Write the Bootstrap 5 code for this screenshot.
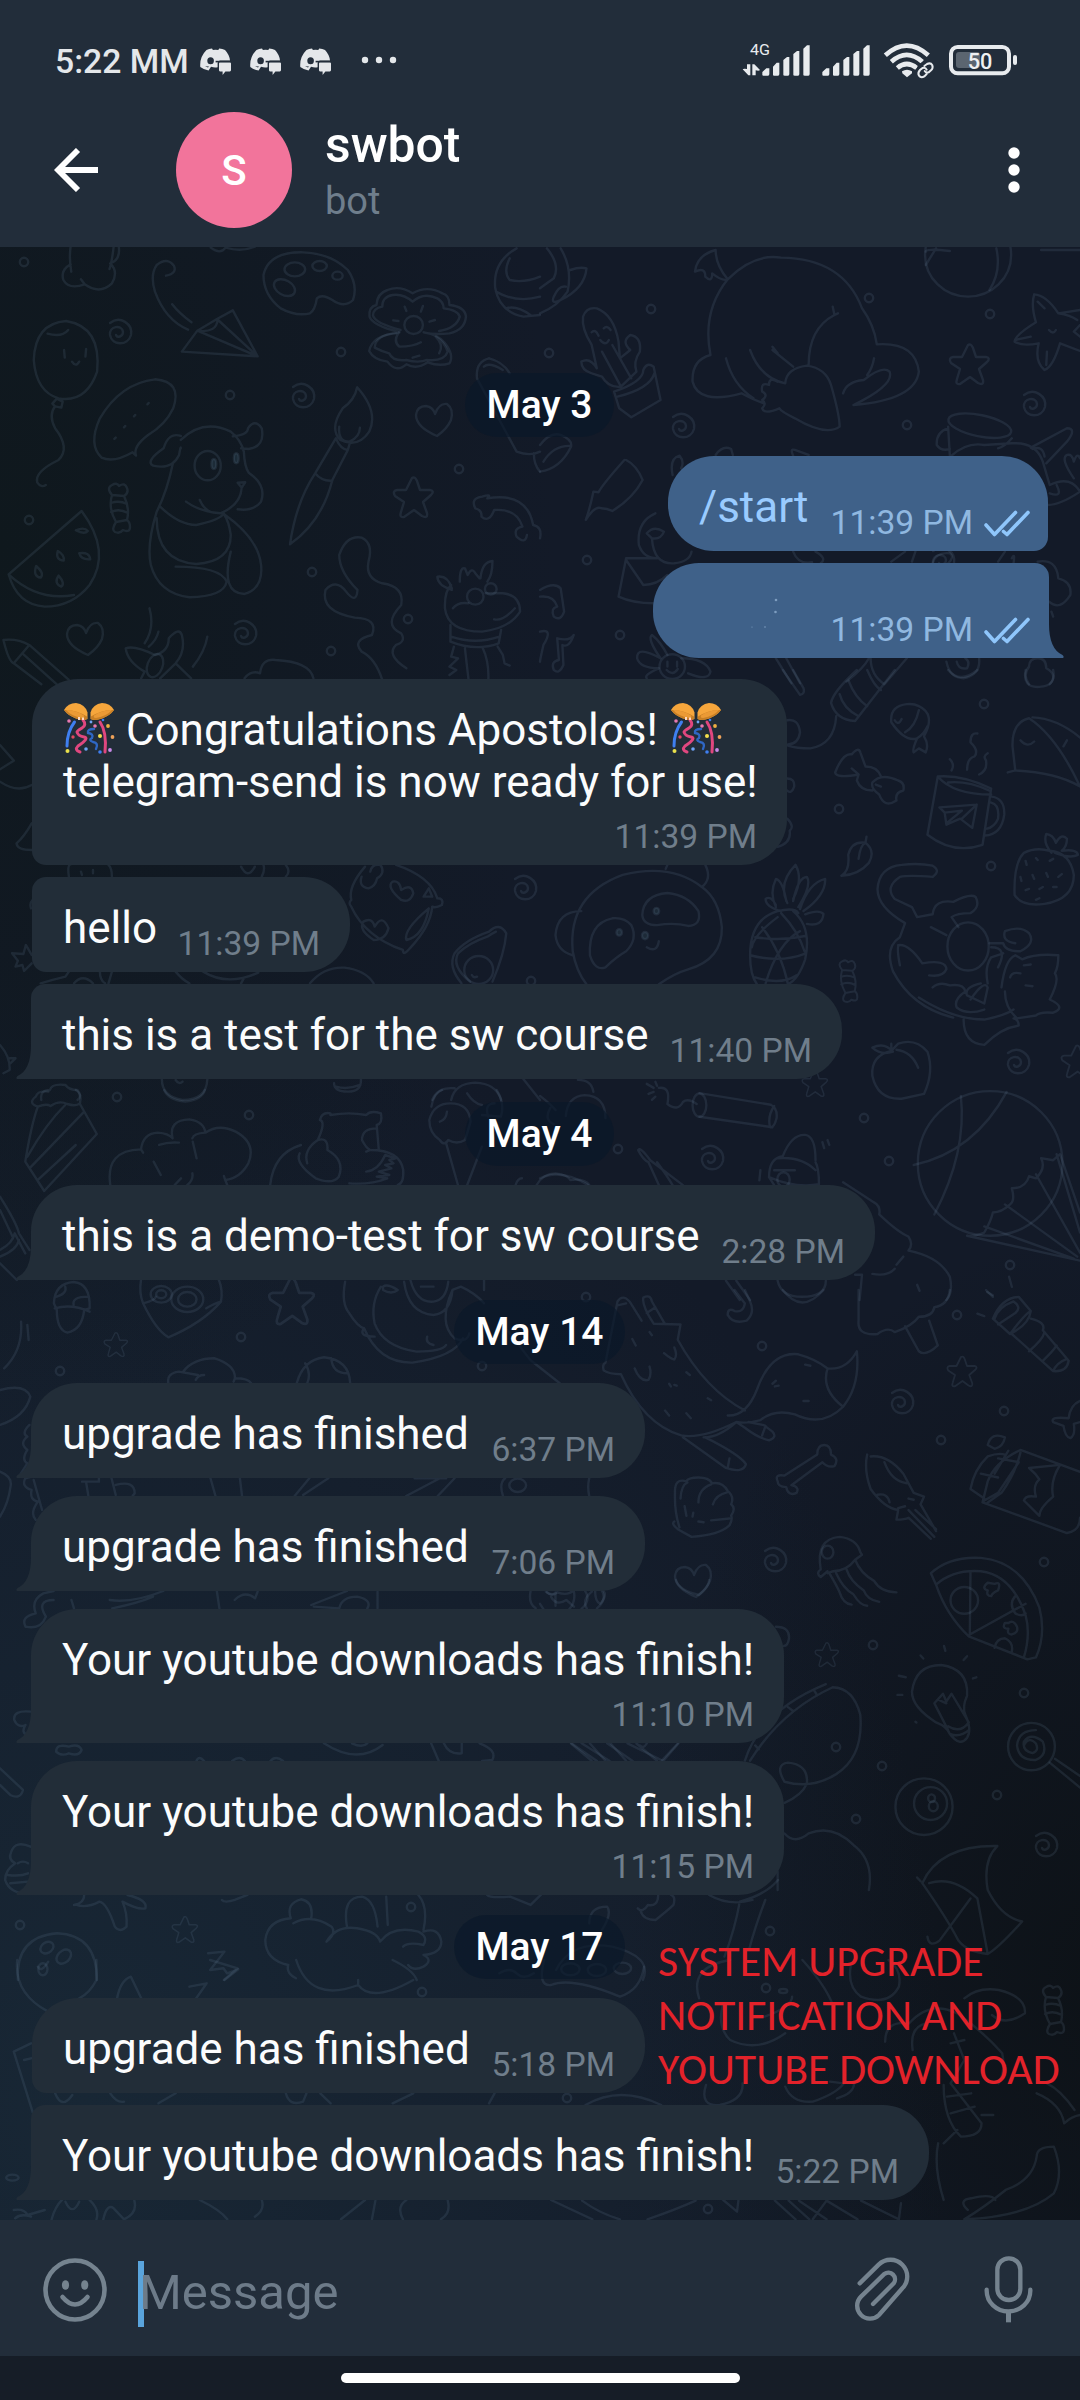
<!DOCTYPE html>
<html lang="en">
<head>
<meta charset="utf-8">
<meta name="viewport" content="width=device-width, initial-scale=1">
<title>swbot</title>
<link href="https://cdn.jsdelivr.net/npm/bootstrap@5.3.0/dist/css/bootstrap.min.css" rel="stylesheet">
<style>
body{margin:0;background:#131a28;font-family:Roboto,"Liberation Sans",sans-serif;color:#fff}
.phone{width:1080px;height:2400px;overflow:hidden}
.topbar{height:247px;background:#222d3a;z-index:3}
.statusline{height:112px;padding:12px 52px 0 55px;color:#e8ebee}
.clock{font-size:33.7px;font-weight:500;line-height:40px;color:#e4e7ea}
.appline{height:116px;padding:0 60px 0 54px}
.avatar-s{width:116px;height:116px;margin-left:78px;background:#f2749b;font-size:42px;font-weight:500}
.titles{margin-left:33px;height:116px;padding-top:4px}
.peer{font-size:49.8px;font-weight:500;line-height:58px}
.peer-kind{font-size:38px;line-height:44px;margin-top:5px;color:#6f7e8c}
.chat{height:1973px;z-index:1;
 background:
 radial-gradient(ellipse 560px 900px at 0 15%,#0f181d 0,rgba(15,24,29,0) 100%),
 radial-gradient(ellipse 860px 1150px at 8% 94%,#182735 0,rgba(24,39,53,0) 100%),
 radial-gradient(ellipse 480px 760px at 102% 88%,#0d1217 0,rgba(13,18,23,0) 100%),
 #131a28}
.doodles{left:0;top:-247px;z-index:0;fill:none;stroke:#7597ae;stroke-opacity:.14;stroke-width:2.4;stroke-linecap:round;stroke-linejoin:round}
.doodles *{vector-effect:non-scaling-stroke}
.thread{z-index:1;padding:126px 32px 0 31px}
.day{height:64px;line-height:64px;border-radius:32px;padding:0 22px;background:rgba(9,24,41,.64);font-size:39px;font-weight:500;align-self:center}
.bub{background:#222d38;height:95px;border-radius:46px;padding:25px 30px 8px 31px;color:#fbfcfd}
.bub-text{font-size:43.98px;line-height:52px;white-space:nowrap}
.bub-time{font-size:33.6px;line-height:40px;color:#707e8b;white-space:nowrap}
.two{height:134px}.three{height:186px}
.out{background:#3f6189;color:#99cbff}
.out .bub-time{color:#90b8e0}
.tail-l{left:-15px;bottom:0}
.tail-r{right:-15px;bottom:0}
.jl{border-top-left-radius:14px}.kl{border-bottom-left-radius:14px;margin-left:1px}
.t0l{border-bottom-left-radius:0}.t0r{border-bottom-right-radius:0}
.jr{border-top-right-radius:14px}.kr{border-bottom-right-radius:14px}
.g12{margin-top:12px}.g18{margin-top:18px}.g19{margin-top:19px}.g20{margin-top:20px}.g21{margin-top:21px}.g23{margin-top:23px}
.ticks{margin:0 -10px 5px 11px}
.out{padding-right:28px}
.party{vertical-align:-9px}
.annot{left:658px;top:1687px;font-family:Carlito,Lato,sans-serif;font-size:43.7px;line-height:54px;color:#e3222a;z-index:2;white-space:nowrap}
.composer{height:136px;background:#222d3a;padding:0 20px 0 41px;color:#6d7b89}
.caret-bar{width:6px;height:66px;background:#5aa4dc;margin-left:29px;margin-top:12px}
.hint{font-size:49px;line-height:58px;margin-left:-5px;margin-top:9px;color:#6d7b89}
.tools{margin-top:12px}
.navarea{height:44px;background:#161d27;padding-top:17px}
.pillbar{width:399px;height:10px;border-radius:5px;background:#fff}
</style>
<script src="https://cdn.jsdelivr.net/npm/bootstrap@5.3.0/dist/js/bootstrap.bundle.min.js"></script>
</head>
<body>
<svg width="0" height="0" class="position-absolute">
<defs>
<symbol id="chatpad" viewBox="0 0 31 28"><path fill="#e4e7ea" fill-rule="evenodd" d="M6.5 2Q9 .7 12 .4L12.9 1.9Q15.5 1.5 18.3 1.9L19.2.4Q22.5.8 25 2Q29.3 6.5 30 12.4H20Q17.8 12.6 17.6 15V19.2Q14.5 19.8 11 18.8L8.6 22.6Q3.5 21.5.3 19Q-.6 9 6.5 2ZM10.6 9.2A3.3 3.5 0 1 0 10.6 16.2A3.3 3.5 0 1 0 10.6 9.2ZM5 18.2L8 19.6 9 18.4Z"/><path fill="#e4e7ea" d="M20 14.2H29.8Q31 14.2 31 15.4V22Q31 23.4 29.8 23.4H25.4L22.6 27V23.4H20Q19 23.4 19 22V15.4Q19 14.2 20 14.2Z"/><path stroke="#222d3a" stroke-width="1.6" d="M15.6 13.6H31"/></symbol>
<symbol id="dtick" viewBox="0 0 46 28"><path fill="none" stroke="#8fc6fb" stroke-width="3.6" stroke-linecap="round" stroke-linejoin="round" d="M2 15L10.5 24.5 31.5 2.5M19.5 21.5L23 24.5 44 2.5"/></symbol>
<symbol id="tailL" viewBox="0 0 20 34"><path d="M20 0V34H1Q-.5 33 1.5 31Q15 25 15 0Z" fill="#222d38"/></symbol>
<symbol id="tailR" viewBox="0 0 20 34"><path d="M0 0V34H19Q20.5 33 18.5 31Q5 25 5 0Z" fill="#3f6189"/></symbol>
<symbol id="kusudama" viewBox="0 0 52 52">
<path fill="#f6a63c" d="M1 8Q5 1 13 1Q22 2 24.5 10.5V17Q20 19 13 16.5Q5 13.500 1 8Z"/><path fill="#c87f25" d="M1 8Q12 7 24 14.500V17Q20 19 13 16.500Q5 13.500 1 8Z"/><path fill="#eb9a35" d="M3 8Q13 8 21 13.500 22 16 19 16 8 14 3 8Z"/>
<path fill="#f6a63c" d="M51 8Q47 1 39 1Q30 2 27.500 10.500V17Q32 19 39 16.500Q47 13.500 51 8Z"/><path fill="#c87f25" d="M51 8Q40 7 28 14.500V17Q32 19 39 16.500Q47 13.500 51 8Z"/><path fill="#eb9a35" d="M49 8Q39 8 31 13.500 30 16 33 16 44 14 49 8Z"/>
<g fill="none" stroke-width="3" stroke-linecap="round"><path stroke="#3f7ff0" d="M11.500 20Q4 30 4 44"/><path stroke="#e0477f" d="M20 18Q24 23 19 26T14 30Q15 34 21 35T15 44Q11 48 17 50"/><path stroke="#2f67c4" stroke-width="2.400" d="M31 27Q24 27 25 31 31 32 29 36 25 38 30 40 36 41 33 47"/><path stroke="#e0477f" d="M37 20Q44 30 42 50"/></g>
<path stroke="#ffd9c0" stroke-width="2" d="M16 15V18M20 15.500V18"/>
<g><circle cx="6" cy="19" r="1.800" fill="#e879b0"/><circle cx="32" cy="24" r="1.800" fill="#e879b0"/><circle cx="45" cy="24" r="1.900" fill="#efb041"/><circle cx="49.500" cy="35" r="1.900" fill="#efa25a"/><circle cx="10" cy="35" r="1.700" fill="#e04a62"/><circle cx="37" cy="34" r="2" fill="#f5e04c"/><circle cx="4.500" cy="49" r="2" fill="#e9e04c"/><circle cx="23" cy="47" r="1.800" fill="#6fa4f5"/><circle cx="37" cy="50" r="1.800" fill="#3f7ff0"/><circle cx="47" cy="48" r="1.900" fill="#c98ae8"/><circle cx="28" cy="20" r="1.400" fill="#6fa4f5"/><circle cx="40" cy="18" r="1.300" fill="#3f7ff0"/></g></symbol>
<g id="sw"><path d="M-10 -9C0 -17 13 -8 11 3 8 14-8 14-10 3-11-6 2-8 3 0 3 5-3 6-4 3"/></g>
<g id="sr"><circle r="4.200"/></g>
<g id="st"><path d="M0-20Q3-22 5-17L8-8 18-8Q23-7 19-3L11 4 15 15Q16 21 10 18L2 12-8 19Q-13 20-11 14L-8 4-17-2Q-20-7-15-8L-6-8Z"/></g>
<g id="ht"><path d="M3 17Q-18 8-18-4 -17-13-8-13 -1-12 1-5 5-16 13-15 20-10 17 1 13 10 3 17Z"/></g>
<g id="cd"><path d="M-7-13Q-13-20-7-23 -2-26 0-22 6-26 8-20 10-15 5-12M-7-13L5-12Q11 0 8 12L-3 14Q-11 0-7-13M-3 14Q-8 22-4 24 1 26 4 22 11 25 11 19 11 14 8 12M-8-5Q0-8 8-4M-8 4Q0 0 9 5"/></g>
</defs>
</svg>
<div class="phone d-flex flex-column position-relative">
 <header class="topbar position-relative">
  <div class="statusline d-flex align-items-center">
   <span class="clock">5:22 MM</span>
   <svg class="ms-3" style="margin-left:11px!important" width="31" height="28"><use href="#chatpad"/></svg>
   <svg width="31" height="28" style="margin-left:19px"><use href="#chatpad"/></svg>
   <svg width="31" height="28" style="margin-left:19px"><use href="#chatpad"/></svg>
   <svg class="ms-4" width="46" height="20" fill="#e4e7ea"><circle cx="10" cy="8" r="3.200"/><circle cx="24" cy="8" r="3.200"/><circle cx="38" cy="8" r="3.200"/></svg>
   <svg class="ms-auto flex-shrink-0" style="margin-right:-2px" width="290" height="56" viewBox="0 0 870 168" fill="#e8ebee">
    <text x="30" y="63" font-size="45" fill="#e8ebee" textLength="60" lengthAdjust="spacingAndGlyphs">4G</text>
    <path d="M21 91H31V124H25L8 106Q10 103 21 105ZM37 124V91H43L60 108Q57 112 47 109V124Z"/>
    <path d="M67 124V114L79 103H88V120Q88 125 84 125H70ZM99 124V98L110 86H118V120Q118 125 114 125H102ZM130 124V78L141 69H148V120Q148 125 144 125H134ZM160 124V60L171 51H178V120Q178 125 174 125H164ZM190 124V44L201 34H209V120Q209 125 205 125H194Z"/>
    <path transform="translate(180)" d="M67 124V114L79 103H88V120Q88 125 84 125H70ZM99 124V98L110 86H118V120Q118 125 114 125H102ZM130 124V78L141 69H148V120Q148 125 144 125H134ZM160 124V60L171 51H178V120Q178 125 174 125H164ZM190 124V44L201 34H209V120Q209 125 205 125H194Z"/>
    <g fill="none" stroke="#e8ebee" stroke-width="14"><path d="M436 64Q500 6 565 64"/><path d="M454 83Q500 42 547 83"/><path d="M472 102Q500 78 530 102"/></g>
    <path d="M486 112Q501 102 516 112V118L501 130 487 118Z"/>
    <circle cx="557" cy="109" r="27" fill="#222d3a"/>
    <g fill="none" stroke="#e8ebee" stroke-width="6" stroke-linecap="round"><path d="M553 96L561 90Q572 85 577 94 580 102 573 109L566 115Q558 118 554 111"/><path d="M560 120L553 127Q543 133 537 125 532 117 540 108L548 102Q556 99 560 107"/></g>
    <rect x="633" y="39" width="174" height="79" rx="20" fill="none" stroke="#e8ebee" stroke-width="12"/>
    <rect x="648" y="54" width="72" height="48" rx="9" fill="#5b6570"/>
    <text x="683" y="104" font-size="68" font-weight="500" fill="#eef0f2" textLength="74" lengthAdjust="spacingAndGlyphs">50</text>
    <rect x="819" y="63" width="12" height="30" rx="6"/>
   </svg>
  </div>
  <div class="appline d-flex align-items-center">
   <svg width="44" height="44" viewBox="0 0 44 44" fill="none" stroke="#fff" stroke-width="5.800"><path d="M24 2L4 22 24 42M4 22H44"/></svg>
   <div class="avatar-s rounded-circle d-flex align-items-center justify-content-center">S</div>
   <div class="titles"><div class="peer">swbot</div><div class="peer-kind">bot</div></div>
   <svg class="ms-auto" width="12" height="46" fill="#fff"><circle cx="6" cy="6" r="5.700"/><circle cx="6" cy="23" r="5.700"/><circle cx="6" cy="40" r="5.700"/></svg>
  </div>
 </header>
 <main class="chat position-relative overflow-hidden">
  <svg class="doodles position-absolute" width="1080" height="2400" viewBox="0 0 1080 2400">
   <g transform="translate(0 245) scale(.3444 .3333)">
    <path d="M205 5Q200 40 207 80M330 5Q325 50 318 72M205 58Q175 75 184 105 200 135 246 118 290 150 325 115 345 80 320 55Q350 45 345 5M246 118L235 103M612 8Q640 30 655 8 700 22 740 5"/>
    <path d="M482 92Q515 85 505 62 485 35 455 60 435 90 450 140 480 225 546 254M500 178Q520 205 556 232M573 257L630 222 676 196 748 334 528 320 573 257ZM573 257L748 334M630 222L748 334M573 257Q630 265 632 222"/>
    <path d="M880 22Q780 20 765 90 765 150 815 190 860 215 900 205 915 195 920 160 935 145 965 165 1000 190 1025 165 1040 120 1010 75 960 25 880 22Z"/><ellipse cx="856" cy="73" rx="30" ry="21"/><ellipse cx="928" cy="63" rx="21" ry="15"/><ellipse cx="980" cy="92" rx="15" ry="12"/><ellipse cx="826" cy="128" rx="33" ry="22" transform="rotate(30 826 128)"/>
    <path d="M1160 262Q1080 240 1073 215 1070 185 1093 180 1095 145 1125 135 1160 120 1198 145 1240 120 1285 145 1305 150 1305 180 1350 185 1353 215 1350 255 1305 265 1260 270 1230 262 1275 270 1290 292 1320 330 1305 355 1275 365 1242 352 1210 375 1180 358 1150 385 1125 350 1085 345 1072 318 1080 270 1160 262"/><path d="M1163 255Q1090 235 1083 212 1083 190 1110 185 1110 155 1140 150 1170 145 1198 170 1230 140 1270 160 1288 170 1288 190 1330 195 1335 215 1325 250 1275 258M1150 265Q1090 270 1088 308 1110 320 1130 325 1140 350 1180 345 1215 355 1240 345 1290 350 1300 320 1290 290 1265 275 1290 300 1275 325"/><circle cx="1201" cy="240" r="27"/><path d="M1175 185L1180 198M1228 183L1222 200M1142 226L1157 228M1247 230L1263 225M1158 262Q1140 290 1160 305 1200 305 1222 292M1198 338L1218 332"/>
    <path d="M192 228Q102 235 98 345 105 440 170 460 250 475 282 380 295 245 192 228ZM138 266Q180 278 198 255M186 315L188 338M250 312L248 335M209 350Q220 368 230 350M165 461L152 476 160 484 178 488 182 470 165 461M160 484Q140 510 160 550 205 610 170 645 100 680 108 712 120 730 133 720"/>
    <path d="M385 622Q330 655 295 638 255 600 290 520 350 415 450 403 530 410 503 490 480 540 430 570 385 605 395 632ZM432 474L428 478M393 510L389 514M364 543L360 547M336 578L332 582"/>
    <path d="M525 585Q590 520 670 560 700 585 708 620 710 665 722 683 775 720 758 770 735 800 690 793M525 573Q490 560 475 610 420 650 445 662 500 675 520 630 525 600 525 610M676 574Q720 570 720 550 740 520 760 550 770 605 722 612L700 610M502 655Q485 740 455 800 425 900 438 960 460 1045 550 1057 650 1055 658 1010 640 965 510 965M465 785Q520 840 570 840 640 825 650 805M540 770Q580 800 640 805 700 780 702 725M580 765Q590 790 610 800M455 820Q455 950 570 957 670 950 670 870 665 830 650 807 750 880 758 960 765 1030 710 1047 640 1045 670 920M690 713L712 712 702 728Z"/><ellipse cx="603" cy="662" rx="38" ry="44"/><ellipse cx="621" cy="657" rx="7" ry="15" fill="#1d2c38"/><ellipse cx="686" cy="640" rx="7" ry="15" fill="#1d2c38"/>
    <path d="M237 798L25 988Q50 1080 130 1085 210 1085 260 1020 325 920 237 798ZM25 988Q110 1070 215 1050M220 856Q245 870 255 858 245 845 220 856ZM230 925Q235 945 262 943 260 920 230 925ZM168 918Q160 945 185 947 188 930 168 918ZM105 963Q95 995 118 998 130 985 105 963ZM170 992Q155 1015 178 1025 190 1015 170 992Z"/>
    <path d="M1037 427Q1030 465 995 490 955 550 988 585 1040 610 1072 560 1100 500 1037 427ZM985 545Q980 590 1015 590 1045 575 1045 548M975 580Q990 615 1010 615L965 705Q935 830 842 898 860 770 915 685ZM1015 597L1010 615M915 685Q935 710 965 707"/>
    <path d="M1380 790Q1365 760 1400 755 1430 745 1415 760 1530 740 1548 840 1575 845 1568 880M1380 790Q1400 795 1398 815 1420 835 1435 795 1500 790 1517 845 1490 850 1500 875 1525 900 1530 870"/>
    <path d="M1110 1305Q1090 1240 1050 1220 1020 1185 1080 1170 1100 1120 1030 1118 930 1100 945 1035 975 1000 1005 1040 1035 1080 1038 1035 985 980 985 930 1005 870 1050 878 1085 895 1070 950 1060 1000 1110 1015 1175 1025 1165 1080 1110 1140 1165 1165 1180 1190 1150 1200 1120 1230 1180 1270 1190 1305"/>
    <path d="M1310 1020Q1290 1040 1292 1090 1300 1160 1400 1160 1480 1150 1510 1100 1510 1050 1460 1045H1410M1312 1035Q1270 1020 1270 995 1300 990 1312 1030M1335 1010Q1335 965 1350 970L1358 990Q1370 965 1380 985L1392 1000M1395 1000Q1400 950 1430 948 1430 990 1415 1010M1435 1123Q1460 1130 1495 1090M1315 1090Q1330 1070 1360 1075M1308 1140L1308 1190Q1380 1220 1448 1195L1455 1155M1310 1175Q1380 1200 1450 1175M1318 1205L1310 1235 1330 1240 1305 1265 1325 1275 1305 1290M1350 1210L1360 1300M1402 1210Q1420 1250 1418 1305M1445 1205L1460 1230 1465 1255 1480 1262"/><circle cx="1380" cy="1055" r="24"/><circle cx="1425" cy="1032" r="17"/>
    <path d="M10 1185Q25 1250 40 1255L85 1200Q50 1180 10 1185ZM40 1255L120 1318M85 1200L200 1305M65 1225L165 1318M434 1090Q450 1150 420 1195M460 1160Q455 1185 432 1205M602 1175Q595 1220 560 1265M410 1300L420 1280Q370 1250 365 1210 390 1200 450 1230 490 1220 490 1180 520 1145 528 1170 540 1220 510 1255L465 1300M510 1255L555 1300M710 1300Q730 1275 755 1285 760 1240 800 1245 900 1250 910 1300"/><ellipse cx="450" cy="1262" rx="22" ry="36" transform="rotate(20 450 1262)"/>
    <path d="M1420 340Q1380 350 1385 400L1500 620Q1540 635 1568 620M1420 340Q1460 350 1480 385M1405 365Q1420 350 1460 375M1550 625Q1550 660 1568 680M1500 10Q1430 50 1438 130 1450 200 1520 215L1568 210M1480 40Q1460 80 1480 105 1520 115 1568 95M1440 140Q1500 175 1568 155M1470 190Q1500 180 1540 210"/>
   </g>
   <g transform="translate(540 245) scale(.3444 .3333)">
    <path d="M60 10Q95 70 80 140 50 185 0 205M20 10Q60 60 40 100L0 130M88 75Q115 65 135 70 130 130 60 165 30 180 40 155 55 120 75 125"/>
    <path d="M125 215Q135 185 165 190 215 210 228 290L232 340 262 315Q235 290 262 270 295 275 290 320 270 350 280 380L235 425Q200 430 180 395L150 385Q120 375 120 350 145 335 165 370L150 300Q120 250 125 215ZM180 320L235 425M210 300L265 400M215 440L230 490 265 517 350 465 330 365Q310 350 300 375 300 410 215 440ZM225 455Q320 430 332 385M150 262Q160 250 170 272M185 250Q195 240 205 255M175 285Q190 305 200 285"/>
    <path d="M510 15Q455 30 450 80 480 65 480 95 500 115 500 85 530 110 545 103 510 60 510 15M545 103Q620 25 700 38 880 40 935 190 970 240 978 298 1090 290 1100 380 1090 465 910 480 1030 420 1015 380 995 360 940 405 890 410 880 445M545 103Q470 200 495 330 440 345 443 410 460 480 585 445 620 465 650 475M540 340Q560 420 620 460M610 315Q640 400 712 415M675 315L735 365M675 305L690 325M780 360Q780 250 855 210L850 185M855 210L865 205M970 340Q965 370 950 390M712 415Q715 370 775 362 830 370 845 420 870 510 870 545 830 575 740 520 700 500 695 490 650 510 645 490 660 475 645 465 665 450 645 440 640 410 665 420 665 395 690 410 710 425M845 400Q870 390 865 420 885 430 875 440 885 470 860 480M757 435Q765 495 778 435M815 440Q825 490 835 440M725 495Q740 520 760 515M540 365Q520 370 525 390 535 410 552 400M640 350Q665 350 662 375M715 15Q735 20 730 50 750 10 785 20L780 40M860 10Q920 30 958 52M915 55L958 75"/>
    <circle cx="1243" cy="30" r="125"/><path d="M1120 20Q1120 10 1190 18M1325 10Q1340 80 1305 135M1150 10L1120 60M1455 15L1568 15"/>
    <path d="M1435 148Q1425 180 1440 232 1380 270 1378 290 1400 305 1448 295 1435 350 1465 375 1490 365 1510 295L1568 318M1435 148Q1470 150 1505 205L1568 195M1505 205Q1540 210 1560 225M1568 240L1550 260 1568 275M1445 170L1465 190M1380 285L1425 275M1470 360L1472 320M1478 255Q1490 270 1498 255"/>
    <ellipse cx="1277" cy="542" rx="93" ry="32" transform="rotate(12 1277 542)"/><path d="M1185 545L1190 632M1370 580Q1350 605 1330 610M1185 550Q1150 560 1152 600 1165 620 1190 612M1195 632Q1240 590 1290 600L1370 595Q1440 590 1460 650L1480 720Q1540 690 1568 740M1425 608L1530 550Q1560 550 1530 590L1470 655M1430 612Q1460 600 1465 635M1500 720Q1520 760 1480 745M1550 700Q1510 640 1530 630 1545 625 1550 650 1560 620 1568 640M1475 780Q1510 780 1568 740"/>
    <path d="M245 645Q180 720 170 742L155 740Q145 790 133 825 160 780 178 790 195 790 210 798 270 760 298 705 280 660 250 645M0 600Q30 560 60 570 95 585 90 605 60 670 0 680M10 650Q40 600 90 603M385 690Q375 640 405 632 420 650 410 670M510 630Q530 600 555 612L560 630M735 632Q725 610 740 615L780 630M335 805Q280 830 287 900 300 940 340 940M310 865Q330 840 360 860 350 885 325 880ZM325 880Q330 960 390 955 435 950 440 920M250 940L228 1055Q270 1075 330 1075M250 945L300 1020Q340 1020 370 990M250 940L340 940M735 920Q750 960 790 952M800 920Q835 940 815 955M1140 955Q1150 920 1190 925 1205 935 1185 955M1020 950L1060 920M1090 920L1080 950M1330 950L1350 920M1370 940Q1380 920 1375 955M1445 950Q1500 940 1505 1000 1545 1010 1540 1050 1510 1100 1478 1070M1485 1100L1490 1115"/>
    <path d="M0 1035Q40 1010 60 1030L70 1100Q60 1130 40 1115 30 1090 50 1085 40 1050 0 1055M0 1160Q40 1150 10 1200 0 1245 0 1250M50 1180Q85 1190 98 1170 85 1210 65 1200L68 1260Q55 1290 40 1275 30 1250 55 1245ZM350 1240Q310 1180 325 1170 350 1190 370 1230M350 1240Q280 1200 282 1240 290 1270 345 1270 300 1290 310 1300M410 1240Q480 1240 495 1280 490 1310 430 1285"/><circle cx="384" cy="1265" r="37"/><path d="M370 1250V1265M398 1250V1265M368 1275Q385 1295 400 1272M685 1240L730 1315M715 1240L755 1315M890 1310Q940 1270 955 1240M960 1240Q960 1290 1000 1318M1065 1240L1000 1318M1180 1250Q1190 1300 1230 1300 1280 1290 1275 1240M1210 1250Q1215 1275 1240 1270 1250 1250 1235 1240M1445 1240Q1420 1240 1420 1265 1400 1290 1420 1318M1445 1240Q1470 1240 1470 1270 1505 1290 1480 1318"/>
   </g>
   <g transform="translate(540 670) scale(.3444 .4018)">
    <path d="M705 0L755 62Q770 60 765 45L735 0M845 82Q850 55 920 0M845 82Q860 125 915 127L1030 0M870 60Q880 95 925 115M895 25Q915 70 950 90M950 0Q970 40 990 50M860 115Q855 185 785 195 745 195 720 188M718 125Q750 120 755 155 750 185 720 185M718 270Q740 270 738 290 730 310 718 300M718 370Q740 390 725 400 730 430 690 440M1185 0Q1220 35 1270 0M1410 0Q1400 45 1450 42 1500 40 1490 0"/>
    <path d="M1065 85Q1015 90 1020 130 1060 180 1095 170 1080 200 1085 205L1100 195 1120 205Q1130 185 1115 165 1150 110 1100 90 1085 83 1065 85M1060 155Q1090 140 1100 100M1095 170Q1115 160 1125 140M1030 125Q1040 140 1050 122M925 260Q860 270 857 255 880 205 905 210 925 190 930 205L945 240M925 260L920 275Q930 300 965 300M945 240Q980 240 990 265M965 280Q990 255 1040 275 1060 280 1055 300 1030 305 1035 325 1000 345 985 310Q960 295 965 280M905 245L925 260M975 285L990 290"/>
    <path d="M1155 265Q1225 260 1310 295L1285 435Q1200 460 1125 410ZM1155 265Q1200 310 1310 310M1185 280Q1240 275 1305 300M1312 315Q1350 320 1348 360 1340 410 1292 412M1310 330Q1335 335 1330 370 1320 390 1298 395M1195 250Q1205 235 1190 222M1240 248Q1240 220 1262 215 1275 200 1250 180 1250 155 1270 158M1275 260Q1300 250 1295 225 1285 215 1300 207M1160 342L1268 335 1255 393 1220 370 1180 385 1175 355ZM1175 355L1225 350 1185 378M1268 335L1225 370"/>
    <path d="M1420 120Q1370 130 1372 190L1380 250 1358 255M1380 250Q1500 255 1568 290M1420 120Q1500 165 1568 290M1430 118Q1500 120 1568 168M1395 175Q1415 195 1435 178M1520 190L1530 175M875 512Q900 500 895 460 905 425 945 430 975 450 955 480 925 510 875 512M925 470Q930 435 945 430L948 415"/>
    <path d="M1405 455Q1375 480 1378 560 1400 590 1465 582 1550 570 1550 510 1540 455 1480 450 1440 440 1405 455ZM1485 455Q1460 430 1470 408 1490 410 1498 430 1515 405 1530 420 1530 440 1515 450 1560 445 1562 460 1540 470 1495 455M1410 475L1413 485M1440 468L1445 473M1480 475L1490 470M1395 515L1398 525M1430 510L1435 520M1470 505L1475 515M1505 515L1515 508M1410 548L1420 545M1450 545L1460 540M1490 540L1500 540M1440 572L1450 568"/>
    <path d="M345 782Q390 755 430 745 530 720 528 640 520 570 470 540 380 480 240 510 80 560 95 700 105 750 135 782M470 540Q500 520 480 485M365 495L370 485M120 600Q50 600 45 660 50 700 95 710M370 555Q300 560 297 610 300 635 340 635 390 628 430 637 470 635 460 600 430 560 370 555ZM210 618Q140 630 145 710 160 750 190 740 220 715 250 700 285 670 265 635 245 615 210 618ZM310 690Q340 705 345 675"/><g fill="#1d2a38"><circle cx="338" cy="600" r="8"/><circle cx="230" cy="653" r="8"/><circle cx="305" cy="661" r="9"/></g>
    <path d="M690 600Q610 620 610 710 610 760 630 782M735 600Q790 640 770 720 750 770 720 782M690 600Q740 590 750 605M700 600Q655 590 655 570 670 560 685 585M685 590Q665 555 685 520 705 525 715 575M718 580Q690 530 742 485 765 520 735 570M735 575Q750 515 775 515 790 535 750 590M755 595Q780 530 828 520 830 560 765 600M770 608Q810 595 823 607 820 640 775 632M625 665Q700 675 770 662M610 710Q700 730 772 705M625 765Q700 785 745 760M645 640Q700 700 720 782M700 605Q750 650 768 700M690 615Q620 660 615 690M755 650Q690 680 655 780"/>
    <path d="M1060 630Q980 590 980 545 985 490 1050 485 1100 480 1140 487 1165 500 1140 515 1070 510 1045 515 1000 540 1030 570L1080 590 1095 615 1140 608Q1145 570 1200 577 1250 555 1265 565 1280 590 1250 605 1210 605 1195 615L1215 640M1060 630L1045 665Q1000 690 1025 750 1080 840 1200 865M1135 640L1180 660M1040 685Q1070 680 1110 730 1180 720 1180 745 1170 765 1130 760M1045 735Q1035 690 1042 685M1100 815Q1200 870 1290 870 1350 860 1375 845M1140 790Q1160 775 1190 785 1230 780 1235 800 1200 820 1210 840 1240 860 1290 845M1250 820Q1290 770 1300 790L1290 830 1240 810Q1230 790 1280 780M1300 780Q1290 740 1310 715L1345 705M1305 680H1345Q1350 700 1395 700 1440 680 1420 655 1395 635 1350 650 1340 675 1380 680M1340 790Q1350 720 1380 710L1400 720Q1440 705 1505 710 1505 740 1495 755 1510 770 1480 820 1530 840 1490 853 1450 850 1440 860L1385 867Q1350 840 1350 800M1230 870Q1230 930 1290 933 1340 890 1390 885 1390 870 1375 867M1365 765Q1370 750 1395 755M1405 735L1425 733M1410 785L1430 787M1310 690Q1360 690 1330 740"/><circle cx="1243" cy="688" r="60"/>
    <path d="M1020 948Q960 960 965 1010 980 1070 1050 1067L1115 1055Q1145 1000 1125 950 1090 915 1040 930L1020 948ZM965 940Q1000 925 1025 950 990 960 965 940M1020 930V950M1035 945Q1080 950 1098 990"/>
    <path d="M310 1030L330 1040M315 1055L330 1050M335 1025L340 1035M325 1070L335 1062M345 1040Q380 1035 370 1080 400 1100 415 1075 430 1065 455 1080"/><ellipse cx="463" cy="1083" rx="20" ry="29"/><path d="M463 1053L670 1082M463 1112L675 1138M670 1082Q690 1090 687 1115 680 1140 668 1138 660 1110 680 1085"/>
    <path d="M705 1210Q730 1155 770 1157 800 1160 800 1220M705 1210Q665 1215 665 1262L680 1282M665 1262Q740 1290 810 1280 810 1240 800 1225M690 1215Q760 1210 800 1245M680 1245H740M820 1175L825 1190M835 1170L840 1182M640 1245L637 1270"/><circle cx="707" cy="1268" r="18"/>
    <ellipse cx="1307" cy="1228" rx="210" ry="180"/><path d="M1222 1060Q1240 1200 1145 1355M1355 1050Q1260 1200 1085 1232" /><path d="M1455 1215L1490 1220 1510 1205 1568 1350M1455 1215Q1470 1240 1440 1265L1420 1260Q1410 1290 1370 1290 1380 1320 1365 1330 1340 1350 1315 1350 1310 1370 1290 1400 1260 1410 1240 1408L1568 1470M1440 1255L1568 1450M1350 1330L1560 1460M1290 1385L1550 1465M1500 1205L1568 1400"/>
    <path d="M880 1275L970 1325Q990 1335 985 1355 1040 1400 1070 1410 1085 1430 1070 1445 1160 1460 1190 1510 1200 1550 1180 1568M915 1505H935L928 1568M965 1503Q1010 1510 1030 1490M1035 1480L1055 1460M1095 1530L1102 1545M1298 1548L1315 1556M1362 1510L1370 1535M540 1520L580 1568M570 1520L610 1568M690 1520Q700 1560 760 1560 830 1560 830 1520M285 1195Q290 1185 320 1220L415 1282M285 1195Q300 1220 315 1225L345 1282M340 1225Q370 1260 385 1282M0 1265Q60 1240 140 1282M110 1020Q150 1020 155 1050M75 1110Q80 1060 130 1058 190 1060 190 1115M0 1060Q30 1080 45 1095M30 1090Q10 1120 40 1130"/>
   </g>
   <g transform="translate(0 670) scale(.3444 .3333)">
    <path d="M0 225L40 272 0 298M0 335Q50 370 92 345M92 460Q70 500 48 520 50 540 92 540M200 620Q195 585 205 583M325 620Q325 595 315 585M235 605L238 615M270 600V610M700 590Q720 630 740 590M760 620Q770 600 765 585M830 620Q845 605 830 585M95 690Q85 700 90 715M92 855L75 825 68 852 35 850 52 872 45 890 65 885 70 903 92 880M0 1125Q30 1160 28 1200L10 1210M28 1165L45 1165 30 1180"/>
    <path d="M1150 585Q1250 620 1270 685 1290 685 1283 705 1265 715 1255 710 1250 770 1190 835 1170 860 1170 840 1060 800 1020 710 1010 700 1020 690 1010 650 1060 590M1165 690Q1120 650 1140 635 1160 630 1165 660 1195 640 1200 670 1190 700 1165 690ZM1085 810Q1040 780 1055 755 1080 740 1088 770 1110 730 1128 775 1120 810 1085 810ZM1050 620Q1040 650 1070 655 1090 650 1095 625 1120 610 1105 585 1080 580 1075 605M1230 680L1245 655 1255 680ZM1245 715Q1170 780 1180 810 1230 800 1245 715Z"/>
    <path d="M1340 940Q1300 890 1320 850 1350 810 1420 785 1450 755 1470 790 1465 850 1430 935M1365 935Q1310 890 1330 850 1360 820 1415 800 1430 790 1440 785"/><circle cx="1390" cy="900" r="42"/><path d="M1370 915Q1375 925 1385 920M118 940Q150 930 190 920L200 905M215 940Q240 910 270 940M290 905Q290 930 305 940M325 905L315 940M510 905Q530 930 550 940M590 905Q660 950 750 908M700 940L708 925M900 940Q940 890 1000 893 1060 900 1085 940M470 1228Q470 1280 530 1290 600 1290 602 1228M510 1230Q520 1245 530 1235M970 1240Q970 1265 1010 1265 1050 1265 1048 1228M975 1250Q1010 1260 1045 1245M120 1290Q115 1260 145 1260 150 1240 190 1245 200 1260 225 1260 240 1280 225 1290M1255 1290Q1270 1250 1320 1255M1310 1290Q1320 1240 1380 1238 1440 1240 1455 1290M1520 1228L1568 1290"/>
   </g>
   <g transform="translate(0 1090) scale(.4209 .3333)">
    <path d="M90 50Q65 40 85 20 90 0 115 5M90 50Q110 40 120 48 140 30 160 42 180 50 190 40 195 10 180 0M90 50Q75 100 60 215L105 303Q180 200 230 132L190 42M65 200Q110 100 155 45M70 235Q150 130 200 65M90 270L180 165M390 0Q400 30 440 35 480 30 487 0"/>
    <path d="M262 285Q250 180 335 178 340 130 375 128 400 130 410 145 400 90 450 88 485 95 488 128 520 100 560 125 610 160 590 220 570 265 535 270L532 258M335 178L340 188M378 165Q400 155 425 158M488 128Q460 130 457 145M365 215L382 255M458 155L467 205M415 285L430 265M445 285Q460 270 457 250M540 285L535 270"/>
    <path d="M760 90Q765 65 785 70L785 75Q830 65 870 75 880 60 905 70 910 100 895 105L900 180M760 90Q775 95 755 150M755 150Q720 180 730 220M895 115Q860 115 860 150 870 175 880 180L870 185M755 150Q780 140 778 180 820 210 805 260 790 285 750 265 700 220 712 190M715 165Q650 190 642 285M880 180Q950 180 958 240 960 280 945 285M915 195L940 205 925 210 935 220 915 225 930 235 900 245 925 255 895 260 920 265M915 195Q900 240 870 245M830 280Q880 285 920 265"/>
    <path d="M1045 150Q1020 130 1020 90 1030 40 1070 40 1115 40 1118 95 1110 130 1105 150 1085 165 1065 150 1055 170 1045 150ZM1060 160L1088 285M1145 170L1110 285M1045 95Q1060 90 1062 65M1025 50Q1030 10 1050 0M1110 10Q1125 40 1145 45M1180 0Q1200 40 1190 80L1145 75M1160 80Q1150 40 1175 40M1225 285Q1230 265 1240 265M1275 285Q1290 250 1320 250 1350 255 1355 270 1390 265 1400 285"/>
    <path d="M0 320Q40 400 45 430L70 480M0 360L30 440M0 480Q30 460 35 430L60 490M0 500Q40 480 45 450M0 520L40 570"/>
    <path d="M175 576Q130 580 128 640L135 660Q135 720 160 728 195 720 200 660L213 655Q215 580 175 576ZM130 655Q170 640 213 665M135 620Q160 610 155 590M175 645Q170 620 210 620M335 570Q330 610 340 640 370 720 400 742 480 700 525 635 530 600 520 570M340 640Q370 630 370 620M490 655Q510 640 525 635"/><circle cx="383" cy="613" r="25"/><circle cx="383" cy="613" r="12"/><circle cx="445" cy="628" r="38"/><circle cx="445" cy="628" r="22"/>
    <path d="M820 575Q810 640 830 670 850 710 865 715 900 820 980 818 1080 800 1100 745M905 590Q880 640 890 700 910 770 990 785 1050 785 1060 765M910 590Q920 580 945 600 930 615 910 600ZM960 575Q970 670 1030 675 1070 670 1075 600L1095 590M975 570Q990 640 1030 635 1060 630 1065 575M1075 600Q1040 700 1080 745 1110 760 1115 730M1015 740Q1010 760 1030 765M1095 590Q1130 610 1150 640M1150 570V600M865 715Q850 740 890 740M1000 590L1030 590"/>
    <path d="M50 695Q55 780 10 835M65 705L68 750M0 900Q60 880 72 920 60 980 0 1005M70 1005Q50 1030 65 1040 45 1060 65 1080 50 1110 65 1120L45 1160M0 1145Q30 1160 25 1190 20 1240 0 1280M75 1160L60 1165Q50 1190 75 1200 70 1230 90 1235 70 1270 85 1290M80 1170L100 1260M400 880Q395 850 425 845L470 855M435 845Q460 805 510 805 560 825 558 865 590 865 597 880M465 870Q470 855 485 855M558 865L555 875M705 880Q720 810 770 802 830 810 832 880M725 820Q740 850 730 880M787 805Q790 850 825 850M195 1175H235V1165M205 1180L210 1218M265 1165L275 1215M275 1185Q320 1170 320 1210L315 1218M500 1165L512 1218M570 1165L575 1218M700 1218L735 1165M720 1215L780 1165M965 1218L1045 1165M985 1165H1060M1040 1218L1080 1165M1195 1218Q1185 1180 1200 1165M1400 1218Q1395 1190 1400 1165"/><circle cx="1230" cy="1186" r="20"/>
    <path d="M1205 720L1260 810Q1300 850 1330 880"/>
   </g>
   <g transform="translate(540 1290) scale(.3444 .3827)">
    <path d="M185 210Q180 195 190 190L225 30Q240 10 260 30L295 80M185 210Q200 220 235 220 300 350 410 380 470 390 570 345M330 88L408 90 400 130Q480 260 595 315M330 88Q295 40 300 20 320 10 325 30L362 88M310 60L335 45M225 40L250 35M275 205Q290 240 315 235 325 220 318 200M360 165Q380 180 390 182 400 170 390 150M268 128L278 145M318 110L325 118M425 215L435 222M375 245L380 252M390 248L397 250M487 283L497 288M363 315L375 328M425 322L438 335M545 328Q600 330 630 260 670 160 750 168 800 180 835 205 890 210 920 160 930 250 880 305 820 360 740 325 680 310 640 340 600 350 570 345L595 360Q630 385 665 393 690 385 675 370L650 353 605 345M835 205Q815 260 880 305M675 245L685 237M682 252L693 250M770 195L785 198M765 290H780M415 385L540 465Q590 480 598 455 580 430 480 385M550 440L545 465M570 345Q520 385 475 385M645 380L655 355"/>
    <path d="M390 605Q380 610 400 625L440 645Q520 640 550 615 560 600 555 590 570 570 555 560 565 540 545 525 530 500 500 505 490 490 460 490 430 490 425 500 390 490 392 530 390 580 405 620M408 545Q410 510 428 503M460 555Q460 520 497 508M502 560Q510 535 545 528M420 565L425 590M445 582L443 592M497 602L550 597M460 605L475 607"/>
    <path d="M690 500Q680 480 710 485L805 430Q805 405 825 405 845 405 845 430 870 440 855 460 835 465 820 450L730 510 Q755 515 745 530 720 540 715 515 690 515 690 500ZM545 65Q545 45 565 55 590 60 595 35L565 0M545 65Q560 90 600 80 625 60 610 30L595 0M705 0Q760 65 823 0M925 0V80Q920 120 980 115 1010 95 1030 110 1080 95 1100 70 1140 70 1145 45 1185 40 1190 0M1060 95L1100 160Q1120 175 1155 145L1130 80"/>
    <path d="M1315 75Q1340 20 1390 18L1425 55Q1420 90 1365 115ZM1365 115Q1410 60 1425 55M1320 75Q1330 45 1375 30 1400 45 1380 60L1330 90M1425 75Q1470 85 1460 105L1535 185Q1530 215 1490 212L1370 115M1420 160Q1460 130 1465 110M1460 185Q1490 160 1500 145M1490 212Q1500 190 1530 180M1270 62L1290 68M1295 0L1315 18M1568 290Q1540 300 1535 335 1480 330 1490 345L1520 355Q1525 385 1540 387 1555 380 1550 350L1568 345"/>
    <path d="M950 430Q940 470 960 520 1000 570 1040 575L1035 600Q1060 600 1070 595L1135 650M960 435Q1010 430 1055 480L1085 530 1115 540 1105 560 1150 630M1000 450Q1020 500 1065 505M980 535Q1010 530 1015 555M1070 575L1145 645M1090 575L1150 625M1040 570L1060 565M1070 545L1085 548M1285 555L1300 500Q1320 450 1395 418L1568 475M1285 555L1530 635Q1568 630 1568 595M1300 435Q1260 470 1250 520L1290 545M1300 435Q1330 425 1350 430M1280 480L1330 490M1330 440L1390 450 1330 530 1290 550M1360 420L1320 480M1395 425Q1380 480 1340 530L1300 555M1420 465L1510 457Q1480 500 1490 540 1450 570 1450 590L1405 550Q1410 535 1440 540 1430 510 1450 495 1440 480 1420 465M1300 405Q1310 370 1350 385 1345 410 1320 415Z"/>
    <path d="M815 730Q800 650 870 645 920 650 930 685L935 692 915 705Q890 735 850 735L835 740M815 730Q800 740 815 750L835 735M840 740Q860 770 870 790 880 820 905 822M860 740Q880 780 910 795 930 825 950 825M890 730Q900 760 940 785 950 810 985 815M915 705Q930 740 970 760 990 790 1035 790"/><circle cx="835" cy="685" r="17"/>
    <path d="M1135 740Q1190 695 1280 700 1400 710 1450 830 1470 900 1440 960L1415 965 1245 905Q1180 850 1150 770ZM1150 770Q1200 730 1280 735 1370 745 1410 850 1425 900 1405 960M1250 735L1248 900M1248 900L1410 820M1380 800Q1360 820 1380 845 1400 855 1410 845M1320 935Q1325 910 1350 910 1375 920 1370 945M1300 765Q1280 780 1300 785 1295 800 1310 800 1315 790 1330 785 1340 760 1320 768ZM1350 870Q1340 885 1360 885 1355 900 1370 900 1390 895 1385 880 1375 860 1360 870Z"/><ellipse cx="1232" cy="811" rx="40" ry="35"/>
    <path d="M1190 1160Q1180 1140 1150 1130 1080 1090 1080 1050 1090 980 1165 980 1245 990 1240 1060 1225 1090 1235 1110 1255 1150 1240 1170 1220 1195 1190 1160ZM1145 1080L1170 1055 1180 1075 1195 1055 1245 1130M1145 1080L1185 1150M1155 1070L1180 1080M1185 1140Q1220 1160 1245 1130M1190 1160Q1220 1170 1245 1150M1173 930L1177 943M1105 955L1113 963M1240 957L1230 967M1042 1008L1062 1012M1257 1015L1267 1012M1038 1058H1052M1090 1128L1093 1130"/>
    <path d="M595 1230Q640 1100 830 1030M610 1230Q700 1100 850 1038 910 1040 930 1110 940 1220 860 1265 790 1305 710 1285 680 1240 720 1235 780 1240 775 1290 760 1320 710 1340M625 1190L635 1200M720 1090L735 1100M795 1045L802 1055M850 1038L865 1040M710 1420Q740 1450 780 1420 850 1395 910 1450 970 1490 955 1568M690 1520V1568M685 880Q725 880 723 910 720 930 708 930M90 1185L150 1230M145 1185L190 1230M205 1185L250 1230M280 1185L340 1230M355 1228L400 1185M290 1190Q300 1200 310 1185M0 820L10 834M20 790Q35 800 50 790 80 800 98 785 105 815 85 834M45 790V825M160 785Q160 815 175 820 195 800 185 787M130 785Q150 810 120 834"/>
    <ellipse cx="1427" cy="1193" rx="68" ry="62"/><path d="M1405 1190Q1420 1165 1440 1185 1450 1205 1430 1210 1400 1205 1405 1180 1425 1155 1460 1180 1475 1215 1440 1228 1390 1230 1385 1190 1390 1150 1440 1150M1480 1235L1568 1300M1495 1225L1568 1270"/><ellipse cx="1115" cy="1350" rx="83" ry="74"/><ellipse cx="1134" cy="1342" rx="48" ry="43"/><circle cx="1137" cy="1328" r="10"/><circle cx="1142" cy="1349" r="13"/>
    <path d="M1110 1550Q1160 1450 1328 1453 1285 1490 1300 1568 1340 1640 1400 1650 1330 1720 1300 1735 1240 1730 1215 1700 1180 1640 1110 1550ZM1130 1550Q1200 1530 1270 1590L1300 1735M1105 1545L1095 1535M1250 1590L1160 1700Q1130 1720 1125 1690"/>
   </g>
   <g transform="translate(0 1580) scale(.5102 .3333)">
    <path d="M50 140Q40 110 70 100 60 60 85 40L105 33M50 140Q80 150 90 110 70 60 105 60M140 60L145 85M215 60Q260 70 320 33M220 85Q270 70 300 50M425 33L430 85M460 60Q480 30 500 55L505 35M610 75L680 33M615 80L665 85Q670 50 700 50 730 60 720 85M740 35V85M1040 33Q1035 70 1050 85M1080 50Q1090 80 1110 60L1125 80M1070 35Q1080 50 1090 40M1180 33Q1190 60 1170 85M1160 35Q1140 60 1150 85M1325 0Q1330 30 1370 45 1390 20 1390 0"/>
    <path d="M60 395Q25 390 28 420 35 445 50 435 40 460 55 465M110 515Q110 490 135 500 155 490 160 510 155 530 135 520 120 530 110 515M0 565L45 630 Q40 660 20 645L0 615M385 543Q390 525 400 543M455 543Q470 525 480 543M530 543Q540 525 555 543M635 490Q700 555 750 495M690 490Q710 505 720 490M845 490L860 543M870 490Q880 525 905 520V490M940 490Q975 510 965 540L945 543M1120 490L1170 543M1140 490L1195 543M1190 490L1240 543M1230 490L1300 543M1330 490L1300 543"/>
    <path d="M60 800Q30 780 22 815 15 840 30 850 10 870 10 900 20 945 60 940M15 885Q40 890 55 880M20 910L55 905M35 850Q45 840 55 850M145 975Q165 970 165 945M150 975Q170 985 195 965 210 970 225 1040 235 1060 248 1040 250 1000 240 965 270 990 285 985 290 960 250 945M435 960Q440 970 460 960L485 945"/>
    <path d="M565 1155Q520 1140 520 1080 525 1020 570 1015 560 970 590 958 615 965 610 1015M575 1030Q610 1000 650 1040 660 1060 640 1085 660 1035 700 1045 740 1055 745 1085 770 1035 820 1055 840 1070 830 1095 800 1085 790 1100M830 1055Q860 1040 865 1085 865 1120 830 1125 850 1140 830 1160 810 1175 800 1155M565 1155Q560 1180 580 1195M680 1040Q670 950 710 950 735 960 740 1040M757 950L760 1035M820 945Q840 980 830 1050M955 945Q960 955 1000 950L1040 975 1060 945M1390 945Q1430 980 1475 960M1250 985Q1260 1000 1270 975 1290 980 1290 945M1255 990Q1260 1020 1285 1020 1310 990 1320 975 1325 950 1315 945M1525 900Q1500 945 1450 965 1440 1050 1420 1130M1500 960Q1480 1040 1468 1110"/>
    <path d="M35 1200Q30 1070 112 1060 190 1065 190 1200"/><ellipse cx="92" cy="1103" rx="12" ry="18" transform="rotate(20 92 1103)"/><ellipse cx="125" cy="1130" rx="13" ry="22" transform="rotate(20 125 1130)"/><ellipse cx="84" cy="1168" rx="9" ry="18"/>
    <path d="M408 1120L440 1115 412 1170 438 1165 445 1180 467 1168 440 1200M1155 1030Q1155 980 1190 980 1200 1000 1180 1050M1090 1170Q1120 1080 1200 1100 1280 1130 1260 1200"/>
    <circle cx="1118" cy="1168" r="18"/><circle cx="1170" cy="1170" r="18"/><circle cx="1220" cy="1165" r="17"/>
   </g>
   <g transform="translate(0 1960) scale(.6888 .3333)">
    <path d="M25 0Q20 100 70 155M140 0V60Q130 100 115 115M55 20Q60 40 70 5M170 115Q175 60 190 50L205 115M275 80L300 70 278 135 310 130 315 155M305 0L345 25 325 60M430 0Q450 130 520 75 540 130 600 60M520 75V60M570 0Q600 30 605 60M725 40Q740 20 750 40T775 40M790 0Q780 80 800 75 830 50 900 110 930 90 935 20"/>
    <path d="M1015 115Q1000 20 1060 0M1165 0Q1200 80 1210 140M1235 20Q1230 80 1250 110 1290 140 1305 80 1310 30 1290 0M1050 130Q1040 200 1060 240 1100 280 1140 220M1110 170Q1150 140 1150 110M1400 115Q1420 80 1450 90 1490 110 1488 160 1460 200 1440 165M1285 245Q1285 180 1320 190M1320 190Q1350 120 1390 160 1430 220 1455 280 1460 330 1450 370M1325 270Q1320 200 1345 190M1385 220L1400 300 1380 370 1425 490Q1425 530 1395 530 1370 480 1370 375M1375 410L1410 400M1380 460L1415 440M1380 250L1400 240M1390 510L1370 550M1425 465H1442M1025 375Q1015 440 1045 435 1080 420 1078 370M1140 380Q1150 430 1180 425 1215 400 1225 370L1205 365M1215 415Q1240 400 1240 370M1505 400Q1540 430 1545 490M1520 370Q1540 390 1560 450M1545 490Q1555 470 1568 465"/>
    <path d="M20 275L45 250M20 275L48 460M35 300L45 295M80 400Q90 450 105 405M160 400Q170 430 180 425M230 430L255 400M415 400Q420 440 440 425L445 400M465 400L480 430M570 430L600 400M710 430L718 400M850 435Q900 375 960 435M1362 550Q1355 620 1370 720M1505 590Q1505 560 1530 560 1545 640 1530 700 1490 770 1400 778M1505 590Q1500 660 1460 690 1430 740 1400 778M1405 750Q1390 720 1410 715 1440 700 1445 720"/>
    <path d="M20 750Q35 745 40 765L65 750M22 775Q30 760 45 770M75 778Q80 740 90 720M140 778Q145 750 130 720M95 725Q105 770 115 725M150 778Q155 730 165 745L180 778Q200 760 195 722M290 720Q320 750 330 778M380 720Q385 750 370 770M495 778L530 720M540 778L545 722M585 778Q575 740 590 720M650 722Q655 760 640 778M800 720L860 778M845 722Q870 760 900 778M940 778Q980 750 1010 722M1050 720L1070 755 1072 722M1125 722L1155 778M1145 722L1175 778M1160 722L1200 778M1180 778L1200 722 1245 778M1250 722L1305 778 1308 730"/><circle cx="18" cy="653" r="9"/><circle cx="1137" cy="93" r="6"/>
   </g>
   <g>
    <use href="#sr" x="24" y="262"/><use href="#sr" x="341" y="352"/><use href="#sr" x="230" y="395"/><use href="#sr" x="459" y="469"/><use href="#sr" x="29" y="520"/><use href="#sr" x="312" y="572"/><use href="#sr" x="408" y="619"/><use href="#sr" x="331" y="651"/><use href="#sr" x="651" y="309"/><use href="#sr" x="869" y="298"/><use href="#sr" x="990" y="314"/><use href="#sr" x="549" y="353"/><use href="#sr" x="907" y="425"/><use href="#sr" x="587" y="560"/><use href="#sr" x="620" y="635"/><use href="#sr" x="984" y="704"/><use href="#sr" x="839" y="809"/><use href="#sr" x="991" y="866"/><use href="#sr" x="864" y="1118"/><use href="#sr" x="889" y="1161"/><use href="#sr" x="618" y="1149"/><use href="#sr" x="1010" y="1265"/><use href="#sr" x="117" y="1097"/><use href="#sr" x="249" y="1115"/><use href="#sr" x="241" y="1337"/><use href="#sr" x="60" y="1371"/><use href="#sr" x="482" y="1366"/><use href="#sr" x="586" y="1297"/><use href="#sr" x="762" y="1346"/><use href="#sr" x="957" y="1315"/><use href="#sr" x="1004" y="1411"/><use href="#sr" x="941" y="1440"/><use href="#sr" x="1044" y="1562"/><use href="#sr" x="873" y="1645"/><use href="#sr" x="1024" y="1693"/><use href="#sr" x="836" y="1747"/><use href="#sr" x="882" y="1766"/><use href="#sr" x="997" y="1795"/><use href="#sr" x="856" y="1819"/><use href="#sr" x="20" y="1925"/><use href="#sr" x="411" y="1907"/><use href="#sr" x="770" y="1931"/><use href="#sr" x="422" y="1992"/><use href="#sr" x="567" y="2098"/><use href="#sr" x="708" y="2209"/><use href="#sr" x="766" y="1988"/><use href="#sr" x="531" y="981"/>
    <use href="#sw" x="120" y="332"/><use href="#sw" x="303" y="396"/><use href="#sw" x="245" y="633"/><use href="#sw" x="683" y="426"/><use href="#sw" x="1034" y="404"/><use href="#sw" x="943" y="560"/><use href="#sw" x="525" y="888"/><use href="#sw" x="1018" y="1062"/><use href="#sw" x="712" y="1158"/><use href="#sw" x="902" y="1402"/><use href="#sw" x="775" y="1560"/><use href="#sw" x="1046" y="1845"/>
    <use href="#st" x="412" y="498"/><use href="#st" x="968" y="365"/><use href="#st" transform="translate(814 1084) scale(.65)"/><use href="#st" transform="translate(1076 1062) scale(.8)"/><use href="#st" transform="translate(290 1302) scale(1.150)"/><use href="#st" transform="translate(115 1345) scale(.6)"/><use href="#st" transform="translate(961 1372) scale(.75)"/><use href="#st" transform="translate(826 1655) scale(.6)"/><use href="#st" transform="translate(184 1930) scale(.65)"/>
    <use href="#ht" x="434" y="419"/><use href="#ht" x="85" y="638"/><use href="#ht" x="693" y="1580"/>
    <use href="#cd" x="119" y="508"/><use href="#cd" transform="translate(848 981) scale(.85)"/><use href="#cd" x="1053" y="2010"/>
   </g>
  </svg>
  <div class="thread d-flex flex-column position-relative">
   <div class="day">May 3</div>
   <div class="bub out kr g19 d-flex align-self-end" style="width:380px"><span class="bub-text">/start</span><span class="bub-time align-self-end ms-auto">11:39 PM</span><svg class="ticks align-self-end flex-shrink-0" width="46" height="28"><use href="#dtick"/></svg></div>
   <div class="bub out jr t0r g12 d-flex align-self-end position-relative" style="width:396px;margin-right:-1px;padding-right:29px"><svg class="flex-shrink-0" width="130" height="60" style="margin-left:11px"><g fill="#7d9dc0"><circle cx="81" cy="12" r="1.300"/><circle cx="80.500" cy="24" r="1.300"/><circle cx="57" cy="39" r=".6"/><circle cx="70" cy="39" r=".8"/></g></svg><span class="bub-time align-self-end ms-auto">11:39 PM</span><svg class="ticks align-self-end flex-shrink-0" width="46" height="28"><use href="#dtick"/></svg><svg class="tail-r position-absolute" width="20" height="34"><use href="#tailR"/></svg></div>
   <div class="bub three kl g21 d-flex flex-column align-self-start" style="width:755px"><div class="bub-text"><svg class="party" width="52" height="52" style="margin:-8px 0 0 0"><use href="#kusudama"/></svg> Congratulations Apostolos! <svg class="party" width="52" height="52" style="margin:-8px 0 0 1px"><use href="#kusudama"/></svg></div><div class="bub-text">telegram-send is now ready for use!</div><span class="bub-time align-self-end mt-auto">11:39 PM</span></div>
   <div class="bub jl kl g12 d-flex align-self-start" style="width:318px"><span class="bub-text">hello</span><span class="bub-time align-self-end ms-auto">11:39 PM</span></div>
   <div class="bub jl t0l g12 d-flex align-self-start position-relative" style="width:811px"><svg class="tail-l position-absolute" width="20" height="34"><use href="#tailL"/></svg><span class="bub-text">this is a test for the sw course</span><span class="bub-time align-self-end ms-auto">11:40 PM</span></div>
   <div class="day g23">May 4</div>
   <div class="bub t0l g19 d-flex align-self-start position-relative" style="width:844px"><svg class="tail-l position-absolute" width="20" height="34"><use href="#tailL"/></svg><span class="bub-text">this is a demo-test for sw course</span><span class="bub-time align-self-end ms-auto">2:28 PM</span></div>
   <div class="day g20">May 14</div>
   <div class="bub t0l g19 d-flex align-self-start position-relative" style="width:614px"><svg class="tail-l position-absolute" width="20" height="34"><use href="#tailL"/></svg><span class="bub-text">upgrade has finished</span><span class="bub-time align-self-end ms-auto">6:37 PM</span></div>
   <div class="bub t0l g18 d-flex align-self-start position-relative" style="width:614px"><svg class="tail-l position-absolute" width="20" height="34"><use href="#tailL"/></svg><span class="bub-text">upgrade has finished</span><span class="bub-time align-self-end ms-auto">7:06 PM</span></div>
   <div class="bub two t0l g18 d-flex flex-column align-self-start position-relative" style="width:753px"><svg class="tail-l position-absolute" width="20" height="34"><use href="#tailL"/></svg><span class="bub-text">Your youtube downloads has finish!</span><span class="bub-time align-self-end mt-auto">11:10 PM</span></div>
   <div class="bub two t0l g18 d-flex flex-column align-self-start position-relative" style="width:753px"><svg class="tail-l position-absolute" width="20" height="34"><use href="#tailL"/></svg><span class="bub-text">Your youtube downloads has finish!</span><span class="bub-time align-self-end mt-auto">11:15 PM</span></div>
   <div class="day g20">May 17</div>
   <div class="bub kl g19 d-flex align-self-start" style="width:613px"><span class="bub-text">upgrade has finished</span><span class="bub-time align-self-end ms-auto">5:18 PM</span></div>
   <div class="bub jl t0l g12 d-flex align-self-start position-relative" style="width:898px"><svg class="tail-l position-absolute" width="20" height="34"><use href="#tailL"/></svg><span class="bub-text">Your youtube downloads has finish!</span><span class="bub-time align-self-end ms-auto">5:22 PM</span></div>
  </div>
  <div class="annot position-absolute">SYSTEM UPGRADE<br>NOTIFICATION AND<br>YOUTUBE DOWNLOAD</div>
 </main>
 <footer class="position-relative">
  <div class="composer d-flex align-items-center">
   <svg width="68" height="68" viewBox="0 0 68 68" fill="none" stroke="#75838f" stroke-width="4.600"><circle cx="34" cy="36" r="29.500"/><path d="M21.500 43Q34 58 46.500 43" stroke-linecap="round"/><g fill="#75838f" stroke="none"><ellipse cx="24.500" cy="31" rx="3.600" ry="4.800"/><ellipse cx="43.700" cy="31" rx="3.600" ry="4.800"/></g></svg>
   <div class="caret-bar"></div><div class="hint">Message</div>
   <svg class="tools ms-auto" width="240" height="110" viewBox="0 0 720 330" fill="none" stroke="#75838f" stroke-width="13" stroke-linecap="round"><path d="M119 133L176 77A50 50 0 0 1 247 148L177 228A38 38 0 0 1 123 173L193 105A20 20 0 0 1 221 133L159 195"/><rect x="532" y="58" width="69" height="125" rx="34"/><path d="M500 152V155A65 62 0 0 0 631 155V152"/><path d="M565.500 217V250" stroke-width="15" stroke-linecap="butt"/></svg>
  </div>
  <div class="navarea d-flex justify-content-center"><div class="pillbar"></div></div>
 </footer>
</div>
</body>
</html>
